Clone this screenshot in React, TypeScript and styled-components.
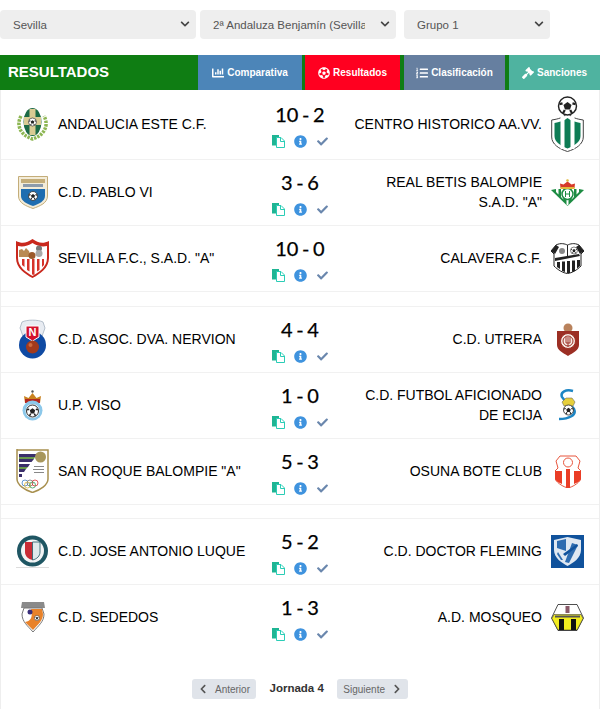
import React from 'react';
import styled, { createGlobalStyle } from 'styled-components';
import {
  FaChartBar,
  FaCheck,
  FaChevronDown,
  FaChevronLeft,
  FaChevronRight,
  FaFutbol,
  FaGavel,
  FaInfoCircle,
  FaListOl,
} from 'react-icons/fa';

const GlobalStyle = createGlobalStyle`
  html, body {
    margin: 0;
    padding: 0;
    background: #fff;
    font-family: "Liberation Sans", Arial, sans-serif;
  }
  * { box-sizing: border-box; }
`;

const Page = styled.div`
  width: 600px;
  height: 709px;
  overflow: hidden;
`;

const Filters = styled.div`
  display: flex;
  gap: 4px;
  padding: 10px 0 16px;
`;

const SelectWrap = styled.div<{ $w: number; $ml?: number }>`
  position: relative;
  width: ${(p) => p.$w}px;
  margin-left: ${(p) => p.$ml || 0}px;
  height: 29px;
  svg {
    position: absolute;
    right: 6px;
    top: 9px;
    color: #444;
    pointer-events: none;
  }
`;

const Select = styled.select`
  appearance: none;
  width: 100%;
  height: 100%;
  border: 0;
  border-radius: 4px;
  background: #eee;
  color: #555;
  font-family: "Liberation Sans", Arial, sans-serif;
  font-size: 11.5px;
  padding: 0 31px 0 13px;
  outline: none;
`;

const Header = styled.div`
  display: flex;
  height: 35px;
  background: #0f7d13;
`;

const Title = styled.div`
  flex: 1;
  padding-left: 8px;
  color: #fff;
  font-size: 15px;
  font-weight: bold;
  line-height: 33px;
`;

const Tab = styled.div<{ $bg: string; $w: number; $ml?: number }>`
  display: flex;
  align-items: center;
  justify-content: center;
  gap: 3px;
  width: ${(p) => p.$w}px;
  margin-left: ${(p) => p.$ml || 0}px;
  background: ${(p) => p.$bg};
  color: #fff;
  font-size: 10px;
  font-weight: bold;
`;

const Card = styled.div`
  height: 619px;
  border-left: 1px solid #eee;
  border-right: 1px solid #eee;
`;

const Row = styled.div<{ $last?: boolean }>`
  display: grid;
  grid-template-columns: 1fr 100px 1fr;
  align-items: center;
  min-height: 66px;
  padding: 6px 15px ${(p) => (p.$last ? 8 : 7)}px;
  border-bottom: ${(p) => (p.$last ? '0' : '1px solid #f1f1f1')};
`;

const Spacer = styled.div<{ $h: number }>`
  height: ${(p) => p.$h}px;
  border-bottom: 1px solid #f1f1f1;
`;

const Team = styled.div<{ $away?: boolean }>`
  display: flex;
  flex-direction: ${(p) => (p.$away ? 'row-reverse' : 'row')};
  align-items: center;
  gap: 9px;
  min-width: 0;
`;

const TeamName = styled.div<{ $away?: boolean }>`
  flex: 1;
  color: #000;
  font-size: 14px;
  line-height: 20px;
  white-space: ${(p) => (p.$away ? 'normal' : 'nowrap')};
  text-align: ${(p) => (p.$away ? 'right' : 'left')};
`;

const LogoSlot = styled.div`
  flex: 0 0 33px;
  display: flex;
  justify-content: center;
  svg { display: block; }
`;

const Center = styled.div`
  display: flex;
  flex-direction: column;
  align-items: center;
  padding-top: 1px;
`;

const Score = styled.div`
  font-family: Lato, sans-serif;
  font-size: 20px;
  line-height: 26px;
  word-spacing: -1.5px;
  color: #000;
  white-space: nowrap;
  -webkit-text-stroke: 0.25px #000;
`;

const Actions = styled.div`
  display: flex;
  align-items: center;
  gap: 9px;
  margin-top: 8px;
  height: 14px;
`;

const InfoIcon = styled(FaInfoCircle)`
  color: #3f93de;
`;

const CheckIcon = styled(FaCheck)`
  color: #6a87ad;
  margin-left: 1px;
`;

const Pager = styled.div`
  display: flex;
  justify-content: center;
  align-items: flex-start;
  gap: 13px;
  margin-top: 28px;
`;

const PagerButton = styled.button`
  display: flex;
  align-items: center;
  gap: 6.5px;
  height: 20px;
  padding: 0 6.5px;
  border: 0;
  border-radius: 3px;
  background: #e0e4ea;
  color: #666;
  font-family: "Liberation Sans", Arial, sans-serif;
  font-size: 10px;
  svg { color: #555; }
`;

const Matchday = styled.div`
  color: #333;
  font-size: 11.5px;
  font-weight: bold;
  line-height: 18px;
`;

/* small ball used inside several crests */
const Ball = ({ x, y, r }: { x: number; y: number; r: number }) => (
  <g>
    <circle cx={x} cy={y} r={r} fill="#fff" stroke="#222" strokeWidth={r * 0.16} />
    <polygon
      points={`${x},${y - r * 0.45} ${x + r * 0.45},${y - r * 0.12} ${x + r * 0.28},${y + r * 0.4} ${x - r * 0.28},${y + r * 0.4} ${x - r * 0.45},${y - r * 0.12}`}
      fill="#222"
    />
    <path
      d={`M${x - r * 0.9} ${y - r * 0.2}L${x - r * 0.55} ${y - r * 0.3}M${x + r * 0.9} ${y - r * 0.2}L${x + r * 0.55} ${y - r * 0.3}M${x - r * 0.5} ${y + r * 0.8}L${x - r * 0.3} ${y + r * 0.45}M${x + r * 0.5} ${y + r * 0.8}L${x + r * 0.3} ${y + r * 0.45}`}
      stroke="#222"
      strokeWidth={r * 0.25}
    />
  </g>
);

const Andalucia = () => (
  <svg width="31" height="33" viewBox="0 0 31 33">
    <path d="M4 8C-1 17 3 27 15.500 31C28 27 32 17 27 8" fill="none" stroke="#8db653" strokeWidth="3.500" strokeDasharray="2.500 1" />
    <ellipse cx="15.500" cy="14" rx="9" ry="14" fill="#1c6a46" />
    <path d="M12.500 1H18.500V9H24V17H18.500V27H12.500V17H7V9H12.500Z" fill="#d9cb93" />
    <Ball x={15.500} y={14} r={4} />
  </svg>
);

const Centro = () => (
  <svg width="33" height="56" viewBox="0 0 33 56">
    <path d="M.7 24C7 23 12 22 16.500 17C21 22 26 23 32.300 24V41C32.300 48 25 53 16.500 55.500C8 53 .7 48 .7 41Z" fill="#fff" stroke="#444" />
    <path d="M3.500 27C8 26 13 25 16.500 22C20 25 25 26 29.500 27V40C29.500 46 23 50 16.500 52.500C10 50 3.500 46 3.500 40Z" fill="#0e7c55" />
    <rect x="9.500" y="20" width="4" height="33" fill="#fff" />
    <rect x="19.500" y="20" width="4" height="33" fill="#fff" />
    <Ball x={16.500} y={10} r={9} />
  </svg>
);

const PabloVI = () => (
  <svg width="30" height="33" viewBox="0 0 30 33">
    <path d="M.5 .5H29.500V20C29.500 27 22 30 15 32.500C8 30 .5 27 .5 20Z" fill="#f3ecd9" stroke="#c4ad79" />
    <path d="M3 3H27V7H3Z" fill="#c4ad79" />
    <path d="M5 8H25V11H5Z" fill="#8d9bab" />
    <path d="M3 13H27V20C27 25 21 28 15 30C9 28 3 25 3 20Z" fill="#1f6db0" />
    <Ball x={15} y={20} r={4.500} />
  </svg>
);

const Betis = () => (
  <svg width="33" height="27" viewBox="0 0 33 27">
    <path d="M0 11L5 10H28L33 11L16.500 27Z" fill="#1d8c43" />
    <path d="M5 10H7.500V15.500L5 13ZM10 10H12.500V20.500L10 18ZM20.500 10H23V18L20.500 20.500ZM25.500 10H28V13L25.500 15.500ZM15.500 21H17.500V25.500L16.500 26.500L15.500 25.500Z" fill="#fff" />
    <circle cx="16.500" cy="15" r="5.500" fill="#fff" stroke="#1d8c43" strokeWidth="1.500" />
    <path d="M14.500 12V18M18.500 12V18M14.500 15H18.500" stroke="#1d8c43" strokeWidth="1" />
    <path d="M9.500 9L9 4.500L12.500 5.500L16.500 2.500L20.500 5.500L24 4.500L23.500 9Z" fill="#d63a2a" />
    <rect x="9.500" y="8" width="14" height="2" fill="#e3b93c" />
    <circle cx="16.500" cy="1.500" r="1.300" fill="#e3b93c" />
  </svg>
);

const Sevilla = () => (
  <svg width="33" height="40" viewBox="0 0 33 40">
    <path d="M0 3C6 6 11 5 16.500 1C22 5 27 6 33 3V20C33 30 24 36 16.500 40C9 36 0 30 0 20Z" fill="#c9281d" />
    <path d="M2 8C7 9 12 8 16.500 5C21 8 26 9 31 8V20C31 29 23 34 16.500 38C10 34 2 29 2 20Z" fill="#fff" />
    <path d="M6 21H8.500V29L6 27ZM11 21H13.500V33.500L11 32ZM16 21H18.500V37L16 36.500ZM21 21H23.500V32L21 33.500ZM26 21H28V27L26 29Z" fill="#d6332a" />
    <path d="M3 19V12L6 11L8 13L10 10L13 13L15 19Z" fill="#b98a53" />
    <circle cx="23" cy="10.500" r="3" fill="#777" />
    <circle cx="23" cy="15.500" r="3.500" fill="#aaa" />
    <circle cx="16" cy="17.500" r="3.500" fill="#9c5a2c" />
  </svg>
);

const Calavera = () => (
  <svg width="33" height="32" viewBox="0 0 33 32">
    <path d="M5 3C10 .5 14 2 16.500 3C19 2 23 .5 28 3L33 9L30 12V24C26 28 21 31 16.500 31.500C12 31 7 28 3 24V12L0 9Z" fill="#fff" stroke="#222" />
    <path d="M0 9L5 3L8 5L4 12ZM33 9L28 3L25 5L29 12Z" fill="#222" />
    <path d="M4 16L28 12L29 14L4 19Z" fill="#222" />
    <path d="M6 20H9V27L6 25ZM11 19.500H14V30L11 29ZM16 19H19V31L16 31ZM21 18.500H24V29L21 30ZM26 18H29V24L26 26.500Z" fill="#222" />
    <circle cx="11" cy="9" r="3" fill="#888" />
    <Ball x={23} y={8.500} r={3.500} />
    <rect x="16" y="3" width="1" height="12" fill="#222" />
  </svg>
);

const Nervion = () => (
  <svg width="27" height="40" viewBox="0 0 27 40">
    <path d="M3 3C8 .5 19 .5 24 3L26 9L22 20H5L1 9Z" fill="#e8ecf2" stroke="#9aa7b8" strokeWidth=".7" />
    <circle cx="13.500" cy="26" r="13.500" fill="#0f4aa3" />
    <path d="M7 7H20V18L13.500 22L7 18Z" fill="#d3112b" stroke="#fff" />
    <text x="13.500" y="17" textAnchor="middle" fontSize="11" fontWeight="bold" fill="#fff" fontFamily="Liberation Sans, sans-serif">N</text>
    <circle cx="13.500" cy="28" r="6.500" fill="#a23a1c" />
    <circle cx="11.500" cy="26" r="2" fill="#cf6a3c" />
  </svg>
);

const Utrera = () => (
  <svg width="22" height="33" viewBox="0 0 22 33">
    <circle cx="11" cy="5" r="4.500" fill="#b9825c" />
    <path d="M0 8H22V22C22 27 16 30 11 33C6 30 0 27 0 22Z" fill="#9c2f24" />
    <circle cx="11" cy="18" r="7.500" fill="#f6ebe4" stroke="#9c2f24" />
    <circle cx="11" cy="18" r="5" fill="none" stroke="#9c2f24" />
    <path d="M9 14V20H13V14M11 14V24" fill="none" stroke="#9c2f24" />
  </svg>
);

const Viso = () => (
  <svg width="21" height="31" viewBox="0 0 21 31">
    <path d="M3 13L2 6L6.500 8L10.500 3L14.500 8L19 6L18 13Z" fill="#c9821f" />
    <path d="M3 9H18V13H3Z" fill="#b3281e" />
    <circle cx="10.500" cy="1.500" r="1.200" fill="#555" />
    <circle cx="10.500" cy="20.500" r="10" fill="#8cc8ea" />
    <circle cx="10.500" cy="21" r="7" fill="#fff" />
    <Ball x={10.500} y={21} r={6} />
  </svg>
);

const Ecija = () => (
  <svg width="20" height="32" viewBox="0 0 20 32">
    <path d="M15 2C8 0 2 3 4 8C6 12 12 14 16 20C19 26 11 30 1 30" fill="none" stroke="#1e86c4" strokeWidth="2.500" />
    <path d="M4 13L8 9H14L17 13L15 17H6Z" fill="#e6cf3c" stroke="#555" strokeWidth=".5" />
    <Ball x={10.500} y={21} r={5} />
  </svg>
);

const SanRoque = () => (
  <svg width="33" height="44" viewBox="0 0 33 44">
    <path d="M1 0V1H32V30C32 36 24 41 16.500 43.500C9 41 1 36 1 30Z" fill="#fff" stroke="#a8904f" strokeWidth="1.500" />
    <path d="M3 5H22L19 8H3ZM3 10H18L15.500 13H3ZM3 15H14L12 18H3ZM3 20H10L8 23H3ZM3 25H6V28H3Z" fill="#3b2f6b" />
    <path d="M3 8H19L18 10H3ZM3 18H12L10 20H3Z" fill="#6a9a4e" />
    <circle cx="24.500" cy="8" r="5.500" fill="#a8975c" />
    <rect x="18" y="17" width="10" height="1" fill="#888" />
    <rect x="17" y="20" width="11" height="1" fill="#888" />
    <rect x="18" y="23" width="10" height="1" fill="#888" />
    <g fill="none" strokeWidth=".8">
      <circle cx="9" cy="34" r="3" stroke="#3f7fc4" />
      <circle cx="14" cy="34" r="3" stroke="#777" />
      <circle cx="19" cy="34" r="3" stroke="#d33" />
      <circle cx="11.500" cy="36" r="3" stroke="#d9b53a" />
      <circle cx="16.500" cy="36" r="3" stroke="#3a9c55" />
    </g>
  </svg>
);

const Osuna = () => (
  <svg width="26" height="33" viewBox="0 0 26 33">
    <path d="M5 1H21L25 6L23 13L26 16V24C23 29 17 32 13 33C9 32 3 29 0 24V16L3 13L1 6Z" fill="#fff" stroke="#e8553c" />
    <circle cx="13" cy="7.500" r="4.500" fill="none" stroke="#e8553c" />
    <path d="M0 16H7V29C4 28 1 26 0 24ZM11 14H15V33H11ZM19 16H26V24C25 26 22 28 19 29Z" fill="#ea3d26" />
  </svg>
);

const Luque = () => (
  <svg width="33" height="33" viewBox="0 0 33 33">
    <circle cx="16.500" cy="16" r="15.500" fill="#1f5663" />
    <circle cx="16.500" cy="16" r="11.500" fill="#f2f4f5" />
    <path d="M9 7H16.500V25C12 24 9 21 9 17Z" fill="#c92c36" />
    <path d="M16.500 7H24V17C24 21 21 24 16.500 25Z" fill="#dfe9ec" stroke="#1f5663" strokeWidth=".8" />
    <rect x="0" y="32" width="33" height="1" fill="#ddd" />
  </svg>
);

const Fleming = () => (
  <svg width="33" height="33" viewBox="0 0 33 33">
    <rect width="33" height="33" fill="#10529c" />
    <path d="M3 5L16.500 2L30 5V15C30 23 22 28 16.500 31C11 28 3 23 3 15Z" fill="#dfe8f2" />
    <path d="M6 6L15 4V16L6 13ZM21 8L27 10L18 28L14 27Z" fill="#2e6cb0" />
    <path d="M7 17L12 25L10 25L6 19Z" fill="#2e6cb0" />
    <path d="M12 19L26 9L27 11L14 21Z" fill="#10529c" />
  </svg>
);

const Sededos = () => (
  <svg width="24" height="30" viewBox="0 0 24 30">
    <path d="M1 0H23L24 6H0Z" fill="#8a8a8a" />
    <path d="M3 6H21L23 12C23 20 17 24 12 30C7 24 1 20 1 12Z" fill="#fff" stroke="#777" />
    <path d="M10 7H21L22 12C22 19 17 22 12 28L4 20C10 19 12 15 10 7Z" fill="#e8822a" />
    <circle cx="9" cy="10" r="2.500" fill="#3a2f7a" />
    <Ball x={16} y={16} r={2.600} />
  </svg>
);

const Mosqueo = () => (
  <svg width="33" height="27" viewBox="0 0 33 27">
    <path d="M7 .5H26L32.500 14L26 26.500H7L.5 14Z" fill="#fff" stroke="#222" strokeWidth=".8" />
    <path d="M.9 14.500L3 10.500H30L32 14.500L26 26H7Z" fill="#f2ec1f" stroke="#222" strokeWidth=".5" />
    <rect x="8" y="15" width="5" height="11" fill="#111" />
    <rect x="20" y="15" width="5" height="11" fill="#111" />
    <rect x="4" y="11.500" width="25" height="2" fill="#555" />
    <rect x="14.500" y="2" width="4" height="7" fill="#8a5a6a" />
  </svg>
);

const CopyIcon = () => (
  <svg width="13" height="13" viewBox="0 0 13 13">
    <rect x="0" y="0" width="7" height="10.500" fill="#1fb594" />
    <path d="M4.500 2.500H9L12.500 6V12.500H4.500Z" fill="#fff" stroke="#2bcdb6" />
    <path d="M8.500 2.500V6.500H12.500" fill="none" stroke="#2bcdb6" />
  </svg>
);

type Match = {
  home: string;
  away: string;
  score: string;
  homeLogo: React.FC;
  awayLogo: React.FC;
};

const groups: { gap: number; matches: Match[] }[] = [
  {
    gap: 14,
    matches: [
      { home: 'ANDALUCIA ESTE C.F.', away: 'CENTRO HISTORICO AA.VV.', score: '10 - 2', homeLogo: Andalucia, awayLogo: Centro },
      { home: 'C.D. PABLO VI', away: 'REAL BETIS BALOMPIE S.A.D. "A"', score: '3 - 6', homeLogo: PabloVI, awayLogo: Betis },
      { home: 'SEVILLA F.C., S.A.D. "A"', away: 'CALAVERA C.F.', score: '10 - 0', homeLogo: Sevilla, awayLogo: Calavera },
    ],
  },
  {
    gap: 13,
    matches: [
      { home: 'C.D. ASOC. DVA. NERVION', away: 'C.D. UTRERA', score: '4 - 4', homeLogo: Nervion, awayLogo: Utrera },
      { home: 'U.P. VISO', away: 'C.D. FUTBOL AFICIONADO DE ECIJA', score: '1 - 0', homeLogo: Viso, awayLogo: Ecija },
      { home: 'SAN ROQUE BALOMPIE "A"', away: 'OSUNA BOTE CLUB', score: '5 - 3', homeLogo: SanRoque, awayLogo: Osuna },
    ],
  },
  {
    gap: 0,
    matches: [
      { home: 'C.D. JOSE ANTONIO LUQUE', away: 'C.D. DOCTOR FLEMING', score: '5 - 2', homeLogo: Luque, awayLogo: Fleming },
      { home: 'C.D. SEDEDOS', away: 'A.D. MOSQUEO', score: '1 - 3', homeLogo: Sededos, awayLogo: Mosqueo },
    ],
  },
];

const App: React.FC = () => {
  return (
    <Page>
      <GlobalStyle />
      <Filters>
        <SelectWrap $w={196}>
          <Select defaultValue="Sevilla">
            <option>Sevilla</option>
          </Select>
          <FaChevronDown size={10} />
        </SelectWrap>
        <SelectWrap $w={196}>
          <Select defaultValue="2ª Andaluza Benjamín (Sevilla)">
            <option>2ª Andaluza Benjamín (Sevilla)</option>
          </Select>
          <FaChevronDown size={10} />
        </SelectWrap>
        <SelectWrap $w={146} $ml={4}>
          <Select defaultValue="Grupo 1">
            <option>Grupo 1</option>
          </Select>
          <FaChevronDown size={10} />
        </SelectWrap>
      </Filters>

      <Header>
        <Title>RESULTADOS</Title>
        <Tab $bg="#4c85b8" $w={104}>
          <FaChartBar size={12} /> Comparativa
        </Tab>
        <Tab $bg="#ff0020" $w={95} $ml={3}>
          <FaFutbol size={12} /> Resultados
        </Tab>
        <Tab $bg="#667fa0" $w={101} $ml={4}>
          <FaListOl size={12} /> Clasificación
        </Tab>
        <Tab $bg="#4fb3a0" $w={91} $ml={4}>
          <FaGavel size={12} /> Sanciones
        </Tab>
      </Header>

      <Card>
        {groups.map((group, g) => (
          <React.Fragment key={g}>
            {group.matches.map((m, i) => {
              const HomeLogo = m.homeLogo;
              const AwayLogo = m.awayLogo;
              const last = g === groups.length - 1 && i === group.matches.length - 1;
              return (
                <Row key={m.home} $last={last}>
                  <Team>
                    <LogoSlot>
                      <HomeLogo />
                    </LogoSlot>
                    <TeamName>{m.home}</TeamName>
                  </Team>
                  <Center>
                    <Score>{m.score}</Score>
                    <Actions>
                      <CopyIcon />
                      <InfoIcon size={13} />
                      <CheckIcon size={11} />
                    </Actions>
                  </Center>
                  <Team $away>
                    <LogoSlot>
                      <AwayLogo />
                    </LogoSlot>
                    <TeamName $away>{m.away}</TeamName>
                  </Team>
                </Row>
              );
            })}
            {group.gap > 0 && <Spacer $h={group.gap + 1} />}
          </React.Fragment>
        ))}

        <Pager>
          <PagerButton>
            <FaChevronLeft size={10} /> Anterior
          </PagerButton>
          <Matchday>Jornada 4</Matchday>
          <PagerButton>
            Siguiente <FaChevronRight size={10} />
          </PagerButton>
        </Pager>
      </Card>
    </Page>
  );
};

export default App;
